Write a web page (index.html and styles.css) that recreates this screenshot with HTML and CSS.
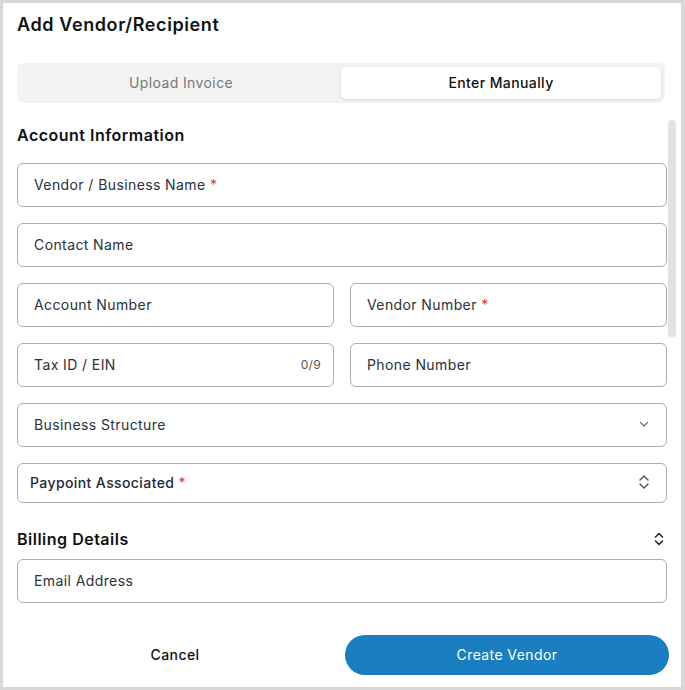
FILE: index.html
```html
<!DOCTYPE html>
<html lang="en">
<head>
<meta charset="utf-8">
<title>Add Vendor/Recipient</title>
<link rel="stylesheet" href="styles.css">
</head>
<body>
<div class="dialog">
  <h1 class="title">Add Vendor/Recipient</h1>
  <div class="tabs">
    <div class="tab">Upload Invoice</div>
    <div class="tab active">Enter Manually</div>
  </div>
  <div class="scroll">
    <div class="content">
      <h2 class="section">Account Information</h2>
      <div class="field"><span>Vendor / Business Name <b class="req">*</b></span></div>
      <div class="field"><span>Contact Name</span></div>
      <div class="row">
        <div class="field"><span>Account Number</span></div>
        <div class="field"><span>Vendor Number <b class="req">*</b></span></div>
      </div>
      <div class="row">
        <div class="field"><span>Tax ID / EIN</span><span class="count">0/9</span></div>
        <div class="field"><span>Phone Number</span></div>
      </div>
      <div class="field select"><span>Business Structure</span>
        <svg class="chev" width="12" height="12" viewBox="0 0 12 12"><path d="M2.5 4.5 6 8l3.5-3.5" fill="none" stroke="#6b7280" stroke-width="1.3" stroke-linecap="round" stroke-linejoin="round"/></svg>
      </div>
      <div class="field combo"><span>Paypoint Associated <b class="req">*</b></span>
        <svg class="updown" width="12" height="18" viewBox="0 0 12 18"><path d="M2 7 6 3l4 4M2 11l4 4 4-4" fill="none" stroke="#4b5563" stroke-width="1.4" stroke-linecap="round" stroke-linejoin="round"/></svg>
      </div>
      <div class="section-row">
        <h2 class="section">Billing Details</h2>
        <svg class="updown" width="12" height="16" viewBox="0 0 12 16"><path d="M2.5 6 6 2.5 9.5 6M2.5 10 6 13.5 9.5 10" fill="none" stroke="#1f2937" stroke-width="1.6" stroke-linecap="round" stroke-linejoin="round"/></svg>
      </div>
      <div class="field"><span>Email Address</span></div>
    </div>
    <div class="thumb"></div>
  </div>
  <div class="footer">
    <button class="btn cancel" type="button">Cancel</button>
    <button class="btn primary" type="button">Create Vendor</button>
  </div>
</div>
</body>
</html>
```
FILE: styles.css
```css
* { box-sizing: border-box; }
html, body { height: 100%; }
body {
  margin: 0;
  padding: 3px 4px 3px 3px;
  background: #d8d8d8;
  font-family: "Inter", "Liberation Sans", sans-serif;
  color: #111827;
}
.dialog {
  height: 684px;
  width: 678px;
  background: #fff;
  display: flex;
  flex-direction: column;
  padding: 10px 0 12px 14px;
}
.title {
  margin: 0;
  font-size: 18px;
  line-height: 24px;
  font-weight: 600;
  letter-spacing: 0.6px;
  color: #111;
}
.tabs {
  margin-top: 26px;
  width: 648px;
  height: 40px;
  background: #f3f3f3;
  border-radius: 6px;
  padding: 4px;
  display: grid;
  grid-template-columns: 1fr 1fr;
}
.tab {
  display: flex;
  align-items: center;
  justify-content: center;
  padding-bottom: 2px;
  font-size: 14px;
  letter-spacing: 0.4px;
  color: #777;
  border-radius: 5px;
}
.tab.active {
  background: #fff;
  color: #111;
  font-weight: 500;
  box-shadow: 0 1px 3px rgba(0,0,0,0.12);
}
.scroll {
  position: relative;
  margin-top: 16px;
  height: 500px;
  width: 659px;
  overflow: hidden;
}
.thumb {
  position: absolute;
  top: 1px;
  right: 0;
  width: 8px;
  height: 217px;
  border-radius: 4px;
  background: #e2e2e2;
}
.content {
  width: 650px;
  padding: 4px 0 8px;
  display: flex;
  flex-direction: column;
  gap: 16px;
}
.section {
  margin: 0;
  font-size: 16px;
  line-height: 24px;
  font-weight: 600;
  letter-spacing: 0.5px;
  color: #111;
}
.section-row {
  display: flex;
  justify-content: space-between;
  align-items: center;
  margin-top: 8px;
  margin-bottom: -8px;
  padding-right: 2px;
}
.row {
  display: grid;
  grid-template-columns: 1fr 1fr;
  gap: 16px;
}
.field {
  height: 44px;
  border: 1px solid #a7afbd;
  border-radius: 6px;
  display: flex;
  align-items: center;
  justify-content: space-between;
  padding: 0 12px 2px 16px;
  font-size: 14px;
  letter-spacing: 0.4px;
  color: #2b303b;
}
.req { color: #e53935; font-weight: 400; }
.count { font-size: 12px; color: #555; letter-spacing: 0.3px; }
.combo {
  height: 40px;
  padding-left: 12px;
  padding-right: 16px;
  font-weight: 500;
  color: #1f2937;
}
.select { padding-right: 16px; }
.footer {
  margin-top: 16px;
  width: 652px;
  display: grid;
  grid-template-columns: 316px 324px;
  gap: 12px;
}
.btn {
  height: 40px;
  border: 0;
  border-radius: 20px;
  padding-bottom: 2px;
  font-family: inherit;
  font-size: 14px;
  letter-spacing: 0.4px;
  font-weight: 500;
  cursor: pointer;
}
.cancel { background: transparent; color: #111; }
.primary { background: #1a7fc1; color: #fff; font-weight: 400; }
```
